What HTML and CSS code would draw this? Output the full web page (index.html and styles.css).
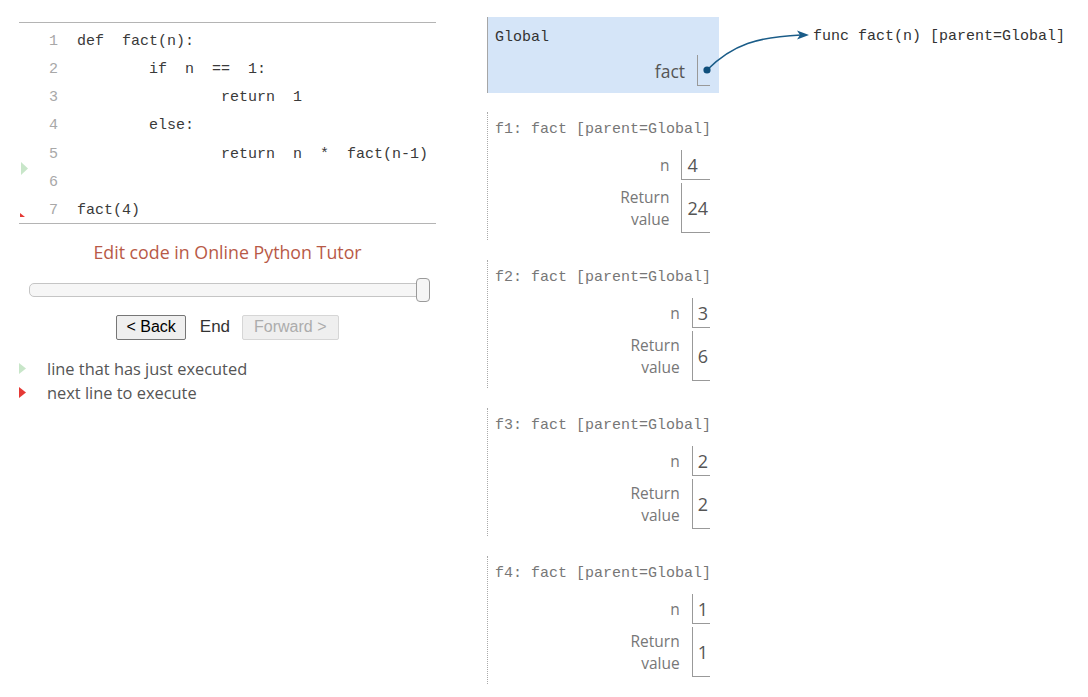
FILE: index.html
```html
<!DOCTYPE html>
<html>
<head>
<meta charset="utf-8">
<link rel="stylesheet" href="styles.css">
</head>
<body>
<div class="page">
  <div class="left">
    <div class="code">
      <div class="row"><span class="gutter"></span><span class="lineno">1</span><span class="src">def  fact(n):</span></div>
      <div class="row"><span class="gutter"></span><span class="lineno">2</span><span class="src">        if  n  ==  1:</span></div>
      <div class="row"><span class="gutter"></span><span class="lineno">3</span><span class="src">                return  1</span></div>
      <div class="row"><span class="gutter"></span><span class="lineno">4</span><span class="src">        else:</span></div>
      <div class="row"><span class="gutter"></span><span class="lineno">5</span><span class="src">                return  n  *  fact(n-1)</span></div>
      <div class="row"><span class="gutter"></span><span class="lineno">6</span><span class="src"></span></div>
      <div class="row"><span class="gutter"></span><span class="lineno">7</span><span class="src">fact(4)</span></div>
      <svg class="mark mark-prev" width="8" height="13" viewBox="0 0 8 13"><polygon points="0,0 7,6.5 0,13" fill="#c8e6c9"/></svg>
      <svg class="mark mark-next" width="6" height="4" viewBox="0 0 6 4"><polygon points="0,0 5,4 0,4" fill="#e53935"/></svg>
    </div>
    <div class="edit"><a href="#">Edit code in Online Python Tutor</a></div>
    <div class="slider">
      <div class="track"></div>
      <div class="handle"></div>
    </div>
    <div class="controls">
      <button class="btn">&lt; Back</button>
      <span class="end">End</span>
      <button class="btn disabled" disabled>Forward &gt;</button>
    </div>
    <div class="legend">
      <div class="legend-row"><svg width="7" height="11" viewBox="0 0 7 11"><polygon points="0,0 7,5.5 0,11" fill="#c8e6c9"/></svg><span>line that has just executed</span></div>
      <div class="legend-row"><svg width="7" height="11" viewBox="0 0 7 11"><polygon points="0,0 7,5.5 0,11" fill="#e53935"/></svg><span>next line to execute</span></div>
    </div>
  </div>
  <div class="frames">
    <div class="frame global">
      <div class="frame-head">Global</div>
      <div class="vars">
        <div class="lab h31 dark">fact</div><div class="val ptr"></div>
      </div>
    </div>
    <div class="frame stack">
      <div class="frame-head">f1: fact [parent=Global]</div>
      <div class="vars">
        <div class="lab h30">n</div><div class="val">4</div>
        <div class="lab h50">Return<br>value</div><div class="val">24</div>
      </div>
    </div>
    <div class="frame stack">
      <div class="frame-head">f2: fact [parent=Global]</div>
      <div class="vars">
        <div class="lab h30">n</div><div class="val">3</div>
        <div class="lab h50">Return<br>value</div><div class="val">6</div>
      </div>
    </div>
    <div class="frame stack">
      <div class="frame-head">f3: fact [parent=Global]</div>
      <div class="vars">
        <div class="lab h30">n</div><div class="val">2</div>
        <div class="lab h50">Return<br>value</div><div class="val">2</div>
      </div>
    </div>
    <div class="frame stack">
      <div class="frame-head">f4: fact [parent=Global]</div>
      <div class="vars">
        <div class="lab h30">n</div><div class="val">1</div>
        <div class="lab h50">Return<br>value</div><div class="val">1</div>
      </div>
    </div>
  </div>
  <div class="heap">
    <div class="heap-obj">func fact(n) [parent=Global]</div>
  </div>
</div>
<svg class="arrows" width="1088" height="697" viewBox="0 0 1088 697">
  <path d="M707,70 C733,44 758,37 801,35" fill="none" stroke="#1a5c88" stroke-width="1.6"/>
  <polygon points="809,35 797,30.5 800,35 797,39.5" fill="#1a5c88"/>
  <circle cx="707" cy="70" r="3.6" fill="#0f4f7c"/>
</svg>
</body>
</html>
```

FILE: styles.css
```css
* { box-sizing: border-box; }
html, body { margin: 0; padding: 0; background: #fff; }
body { position: relative; width: 1088px; height: 697px; overflow: hidden; }

.page { display: flex; align-items: flex-start; }

.left { width: 417px; margin-left: 19px; padding-top: 22px; }

.code {
  position: relative;
  border-top: 1px solid #b4b4b4;
  border-bottom: 1px solid #b4b4b4;
  padding-top: 3px;
  font-family: "Liberation Mono", monospace;
  font-size: 15px;
}
.row { display: flex; height: 28.15px; line-height: 32px; }
.gutter { width: 12px; flex: none; }
.lineno { width: 27px; flex: none; text-align: right; color: #a8a8a8; }
.src { padding-left: 19px; white-space: pre; color: #3a3a3a; }

.mark { position: absolute; }
.mark-prev { left: 2px; top: 139px; }
.mark-next { left: 1px; top: 190px; }

.edit {
  margin-top: 16px;
  text-align: center;
  line-height: 24px;
  font-family: "Open Sans", sans-serif;
  font-size: 17.8px;
}
.edit a { color: #b85a47; text-decoration: none; }

.slider { position: relative; margin-top: 14px; height: 24px; }
.track {
  position: absolute; left: 10px; right: 6px; top: 5px; height: 14px;
  background: #f6f6f6; border: 1px solid #c5c5c5; border-radius: 5px;
}
.handle {
  position: absolute; left: 397px; top: 0; width: 14px; height: 24px;
  background: #f6f6f6; border: 1px solid #9a9a9a; border-radius: 4px;
}

.controls {
  margin-top: 13px;
  display: flex; justify-content: center; align-items: center;
  height: 25px;
}
.btn {
  height: 25px; padding: 0 9px;
  font-family: "Liberation Sans", Arial, sans-serif; font-size: 16px;
  color: #000; background: #efefef; border: 1px solid #767676; border-radius: 2px;
}
.btn.disabled { color: #acacac; background: #efefef; border-color: #d6d6d6; padding: 0 11px; }
.end {
  margin: 0 12px 0 14px;
  font-family: "Liberation Sans", Arial, sans-serif; font-size: 17px; color: #333;
}

.legend { margin-top: 17px; font-family: "Open Sans", sans-serif; font-size: 16.4px; color: #555; }
.legend-row { display: flex; align-items: center; height: 24px; }
.legend-row svg { flex: none; margin-right: 21px; }

.frames { margin-left: 51px; padding-top: 17px; width: 232px; flex: none; }
.frame { padding: 8px 9px 7px 7px; }
.frame.global { background: #d5e5f8; border-left: 1px solid #a6a6a6; padding-top: 11px; }
.frame.global .frame-head { margin-bottom: 7px; }
.frame.stack { border-left: 1px dotted #aaa; margin-top: 20px; }
.frame.global + .frame.stack { margin-top: 19px; }
.frame-head {
  font-family: "Liberation Mono", monospace; font-size: 15px;
  line-height: 20px; margin-bottom: 10px; color: #777; white-space: pre;
}
.global .frame-head { color: #333; }

.vars {
  display: grid; grid-template-columns: auto auto; justify-content: end; row-gap: 3px;
  font-family: "Open Sans", sans-serif;
}
.lab {
  display: flex; align-items: center; justify-content: flex-end; text-align: right;
  padding-right: 12px; font-size: 15.5px; line-height: 22px; color: #777;
}
.lab.dark { color: #555; font-size: 17.5px; }
.h30 { height: 30px; }
.h31 { height: 31px; }
.h50 { height: 50px; }
.val {
  display: flex; align-items: center;
  border-left: 1px solid #999; border-bottom: 1px solid #999;
  padding: 0 2px 0 5px; font-size: 18px; color: #555;
}
.val.ptr { width: 13px; }

.heap { margin-left: 94px; padding-top: 27px; }
.heap-obj { font-family: "Liberation Mono", monospace; font-size: 15px; line-height: 20px; color: #333; white-space: pre; }

.arrows { position: absolute; left: 0; top: 0; pointer-events: none; }
```
